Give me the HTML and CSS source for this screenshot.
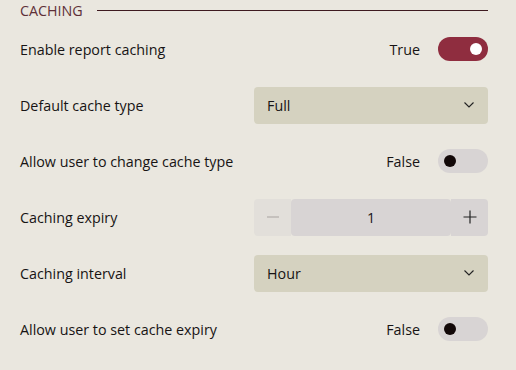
FILE: index.html
```html
<!DOCTYPE html>
<html>
<head>
  <meta name="viewport" content="width=device-width, initial-scale=1.0">
  <link rel="stylesheet" href="styles.css">
</head>
<body>
  <div class="panel">
    <!-- CABECERA -->
    <div class="seccion">
      <span class="seccion-titulo">CACHING</span>
      <span class="seccion-linea"></span>
    </div>

    <div class="fila">
      <span class="etiqueta">Enable report caching</span>
      <div class="valor-toggle">
        <span>True</span>
        <span class="toggle on"><span class="knob"></span></span>
      </div>
    </div>

    <div class="fila">
      <span class="etiqueta">Default cache type</span>
      <div class="select">
        <span>Full</span>
        <svg width="10" height="6" viewBox="0 0 10 6"><path d="M0.5 0.5 L5 5 L9.5 0.5" fill="none" stroke="#222" stroke-width="1.1"/></svg>
      </div>
    </div>

    <div class="fila">
      <span class="etiqueta">Allow user to change cache type</span>
      <div class="valor-toggle">
        <span>False</span>
        <span class="toggle"><span class="knob"></span></span>
      </div>
    </div>

    <div class="fila">
      <span class="etiqueta">Caching expiry</span>
      <div class="stepper">
        <span class="paso disabled">
          <svg width="14" height="14" viewBox="0 0 14 14"><path d="M1 7 H13" stroke="#a8a4a0" stroke-width="1.2"/></svg>
        </span>
        <span class="numero">1</span>
        <span class="paso">
          <svg width="14" height="14" viewBox="0 0 14 14"><path d="M0.5 7 H13.5 M7 0.5 V13.5" stroke="#222" stroke-width="1.2"/></svg>
        </span>
      </div>
    </div>

    <div class="fila">
      <span class="etiqueta">Caching interval</span>
      <div class="select">
        <span>Hour</span>
        <svg width="10" height="6" viewBox="0 0 10 6"><path d="M0.5 0.5 L5 5 L9.5 0.5" fill="none" stroke="#222" stroke-width="1.1"/></svg>
      </div>
    </div>

    <div class="fila">
      <span class="etiqueta">Allow user to set cache expiry</span>
      <div class="valor-toggle">
        <span>False</span>
        <span class="toggle"><span class="knob"></span></span>
      </div>
    </div>
  </div>
</body>
</html>
```
FILE: styles.css
```css
/* GENERAL */
body {
  margin: 0;
  background: #eae7df;
  font-family: "Open Sans", "Noto Sans", sans-serif;
  font-size: 14.3px;
  color: #171414;
}

.panel {
  padding: 0 28px 0 20px;
  display: flex;
  flex-direction: column;
}

/* CABECERA */
.seccion {
  height: 21px;
  display: flex;
  align-items: center;
  gap: 14px;
}

.seccion-titulo {
  color: #5e3038;
}

.seccion-linea {
  flex: 1;
  height: 1px;
  background: #3e1a20;
}

/* FILAS */
.fila {
  height: 56px;
  display: flex;
  align-items: center;
  justify-content: space-between;
}

.valor-toggle {
  display: flex;
  align-items: center;
  gap: 18px;
}

.toggle {
  width: 50px;
  height: 24px;
  border-radius: 12px;
  background: #d8d4d4;
  display: flex;
  align-items: center;
  padding: 0 6px;
  box-sizing: border-box;
}

.knob {
  width: 12px;
  height: 12px;
  border-radius: 50%;
  background: #120808;
}

.toggle.on {
  background: #8f2d3f;
  justify-content: flex-end;
}

.toggle.on .knob {
  background: #ffffff;
}

/* SELECT */
.select {
  width: 234px;
  height: 37px;
  border-radius: 4px;
  background: #d5d2c0;
  display: flex;
  align-items: center;
  justify-content: space-between;
  padding: 0 14px 0 13px;
  box-sizing: border-box;
}

/* STEPPER */
.stepper {
  width: 234px;
  height: 37px;
  display: flex;
  border-radius: 4px;
  overflow: hidden;
}

.paso {
  width: 37px;
  display: flex;
  align-items: center;
  justify-content: center;
  background: #d8d4d4;
}

.paso.disabled {
  background: #e2dfda;
}

.numero {
  flex: 1;
  display: flex;
  align-items: center;
  justify-content: center;
  background: #d8d4d4;
  border-radius: 4px;
}
```
